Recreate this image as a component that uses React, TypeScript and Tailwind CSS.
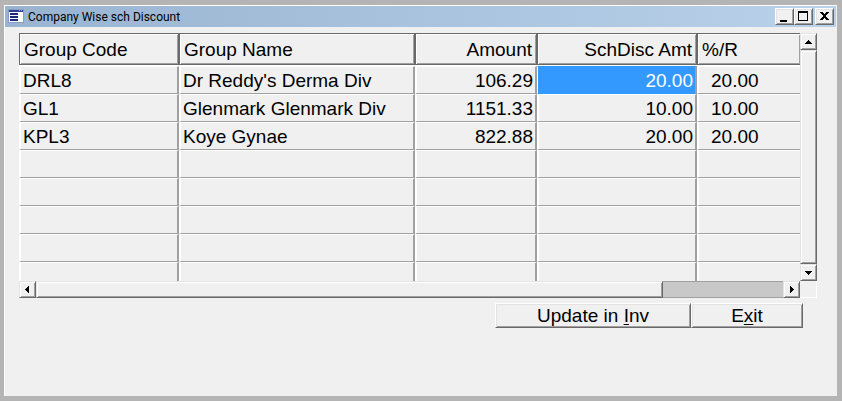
import type { ReactNode } from "react";

type Row = {
  code: string;
  name: string;
  amount: string;
  discount: string;
  rate: string;
};

const rows: Row[] = [
  { code: "DRL8", name: "Dr Reddy's Derma Div", amount: "106.29", discount: "20.00", rate: "20.00" },
  { code: "GL1", name: "Glenmark Glenmark Div", amount: "1151.33", discount: "10.00", rate: "10.00" },
  { code: "KPL3", name: "Koye Gynae", amount: "822.88", discount: "20.00", rate: "20.00" },
];

const blank: Row = { code: "", name: "", amount: "", discount: "", rate: "" };
const allRows = [...rows, blank, blank, blank, blank, blank];

const raised =
  "border border-t-[#e3e3e3] border-l-[#e3e3e3] border-r-[#696969] border-b-[#696969] bg-[#f0f0f0] shadow-[inset_1px_1px_0_#fff,inset_-1px_-1px_0_#a0a0a0]";
const raisedWhite =
  "border border-t-white border-l-white border-r-[#696969] border-b-[#696969] bg-[#f0f0f0] shadow-[inset_1px_1px_0_#e3e3e3,inset_-1px_-1px_0_#a0a0a0]";

const head =
  "h-8 p-0 pt-[2px] px-1 font-normal border border-[#696969] shadow-[inset_1px_1px_0_#fff,inset_-1px_-1px_0_#a0a0a0]";
const cell =
  "h-7 p-0 pt-[2px] px-[2px] border-x-2 border-y border-l-white border-t-white border-r-[#a0a0a0] border-b-[#a0a0a0]";

function CaptionButton({ label, children }: { label: string; children: ReactNode }) {
  return (
    <button type="button" aria-label={label} className={`w-[19px] h-[17px] flex items-center justify-center ${raisedWhite}`}>
      <svg width="15" height="13" viewBox="0 0 15 13" shapeRendering="crispEdges" aria-hidden="true">
        {children}
      </svg>
    </button>
  );
}

function ArrowButton({ label, d }: { label: string; d: string }) {
  return (
    <button type="button" aria-label={label} className={`size-[17px] shrink-0 flex items-center justify-center ${raised}`}>
      <svg width="15" height="15" viewBox="0 0 15 15" shapeRendering="crispEdges" aria-hidden="true">
        <path d={d} fill="#000" />
      </svg>
    </button>
  );
}

function TitleBar() {
  return (
    <header className="h-[21px] flex items-center gap-1 pl-[3px] pr-[2px] bg-gradient-to-r from-[#99b4d1] to-[#b9d1ea]">
      <svg width="16" height="15" viewBox="0 0 16 15" shapeRendering="crispEdges" aria-hidden="true">
        <rect width="16" height="14" fill="#8b9cc6" />
        <rect x="1" y="1" width="14" height="2" fill="#2b3f8f" />
        <path d="M11 1h1v1h-1zM13 1h1v1h-1z" fill="#a9b6dc" />
        <rect x="1" y="3" width="14" height="10" fill="#fff" />
        <path d="M2 4h8v2H2zM2 7h8v2H2zM2 10h8v2H2z" fill="#16297a" />
      </svg>
      <h1 className="grow font-[Roboto,'Open_Sans',sans-serif] text-[12px] leading-4">Company Wise sch Discount</h1>
      <div className="flex">
        <CaptionButton label="Minimize">
          <path d="M3 10h7v2H3z" fill="#000" />
        </CaptionButton>
        <CaptionButton label="Maximize">
          <path fillRule="evenodd" d="M2 1h10v10H2zM3 3v7h8V3z" fill="#000" />
        </CaptionButton>
      </div>
      <div className="-ml-[2px]">
        <CaptionButton label="Close">
          <path
            d="M3 2h3v1H3zM9 2h3v1H9zM4 3h3v1H4zM8 3h3v1H8zM5 4h5v1H5zM6 5h3v2H6zM5 7h5v1H5zM4 8h3v1H4zM8 8h3v1H8zM3 9h3v1H3zM9 9h3v1H9z"
            fill="#000"
          />
        </CaptionButton>
      </div>
    </header>
  );
}

function DiscountTable() {
  return (
    <div className="h-[248px] grow min-w-0 overflow-hidden">
      <table className="w-full table-fixed border-separate border-spacing-0 text-left">
        <colgroup>
          <col className="w-[160px]" />
          <col className="w-[236px]" />
          <col className="w-[122px]" />
          <col className="w-[160px]" />
          <col />
        </colgroup>
        <thead>
          <tr>
            <th className={head}>Group Code</th>
            <th className={head}>Group Name</th>
            <th className={`${head} text-right`}>Amount</th>
            <th className={`${head} text-right`}>SchDisc Amt</th>
            <th className={`${head} border-r-0`}>%/R</th>
          </tr>
        </thead>
        <tbody>
          <tr aria-hidden="true">
            <td colSpan={5} className="h-px p-0 bg-white" />
          </tr>
          {allRows.map((row, i) => (
            <tr key={i}>
              <td className={cell}>{row.code}</td>
              <td className={cell}>{row.name}</td>
              <td className={`${cell} text-right`}>{row.amount}</td>
              {i === 0 ? (
                <td className="h-7 p-0 pt-[2px] px-[2px] border-l border-r-2 border-y border-l-white border-r-[#a0a0a0] border-y-[#3399ff] bg-[#3399ff] text-white text-right">
                  {row.discount}
                </td>
              ) : (
                <td className={`${cell} text-right`}>{row.discount}</td>
              )}
              <td className={`${cell} border-r-0 pl-3`}>{row.rate}</td>
            </tr>
          ))}
        </tbody>
      </table>
    </div>
  );
}

export default function App() {
  return (
    <div className="min-h-screen flex flex-col bg-[#b4b4b4] py-[5px] pl-1 pr-[5px] font-['Liberation_Sans',Arial,sans-serif] text-[19px] leading-6 text-black">
      <main className="grow border border-t-white border-l-white border-b-[#f0f0f0] border-r-[#f0f0f0] bg-[#f0f0f0]">
        <TitleBar />

        <div className="pl-[14px] pr-[19px] pt-[6px]">
          <div className="flex">
            <DiscountTable />
            <div className="w-[17px] shrink-0 flex flex-col">
              <ArrowButton label="Scroll up" d="M7 6h1v1h1v1h1v1h1v1H4V9h1V8h1V7h1z" />
              <div className={`grow ${raised}`} />
              <ArrowButton label="Scroll down" d="M4 6h7v1h-1v1H9v1H8v1H7V9H6V8H5V7H4z" />
            </div>
          </div>
          <div className="flex">
            <div className="grow flex">
              <ArrowButton label="Scroll left" d="M9 4v7H8v-1H7V9H6V8H5V7h1V6h1V5h1V4z" />
              <div className={`h-[17px] grow ${raised}`} />
              <div className="w-[120px] h-[17px] bg-[#c8c8c8] border-y border-[#a0a0a0]" />
              <ArrowButton label="Scroll right" d="M6 4v7h1v-1h1V9h1V8h1V7H9V6H8V5H7V4z" />
            </div>
            <div className="size-[17px] shrink-0 border-r border-b border-white" />
          </div>

          <div className="flex justify-end pt-[5px] pr-[14px]">
            <button type="button" className={`w-[196px] h-[25px] leading-[23px] ${raisedWhite}`}>
              Update in <span className="underline underline-offset-2 decoration-1">I</span>nv
            </button>
            <button type="button" className={`w-28 h-[25px] leading-[23px] ${raisedWhite}`}>
              E<span className="underline underline-offset-2 decoration-1">x</span>it
            </button>
          </div>
        </div>
      </main>
    </div>
  );
}
